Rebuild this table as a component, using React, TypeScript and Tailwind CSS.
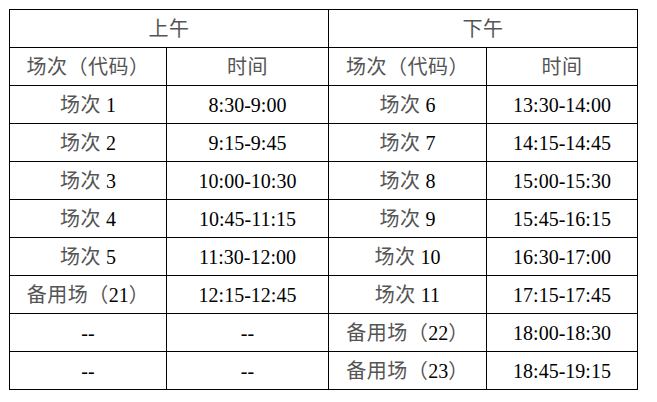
import React from 'react';

const rows: [string, string, string, string][] = [
  ['场次 1', '8:30-9:00', '场次 6', '13:30-14:00'],
  ['场次 2', '9:15-9:45', '场次 7', '14:15-14:45'],
  ['场次 3', '10:00-10:30', '场次 8', '15:00-15:30'],
  ['场次 4', '10:45-11:15', '场次 9', '15:45-16:15'],
  ['场次 5', '11:30-12:00', '场次 10', '16:30-17:00'],
  ['备用场（21）', '12:15-12:45', '场次 11', '17:15-17:45'],
  ['--', '--', '备用场（22）', '18:00-18:30'],
  ['--', '--', '备用场（23）', '18:45-19:15'],
];

// CJK glyphs look lighter in the source (Song face), so tint them grey
function Mixed({ text }: { text: string }) {
  const parts = text.split(/([\u3000-\u9fff\uff00-\uffef]+)/).filter(Boolean);
  return (
    <>
      {parts.map((p, i) =>
        /[\u3000-\u9fff\uff00-\uffef]/.test(p) ? (
          <span key={i} className="text-[#555] tracking-[0.5px]">{p}</span>
        ) : (
          <span key={i}>{p}</span>
        )
      )}
    </>
  );
}

const cell = 'border border-black h-[38px] p-0 text-center align-middle';

export default function App() {
  return (
    <div className="bg-white w-[657px] h-[402px] pt-[9px] pl-[9px]">
      <table
        className="border-collapse text-[20px] leading-none text-black [text-spacing-trim:space-all]"
        style={{ fontFamily: '"Liberation Serif", "Noto Sans CJK SC", serif' }}
      >
        <colgroup>
          <col className="w-[157px]" />
          <col className="w-[162px]" />
          <col className="w-[158px]" />
          <col className="w-[151px]" />
        </colgroup>
        <tbody>
          <tr>
            <td colSpan={2} className={cell}><Mixed text="上午" /></td>
            <td colSpan={2} className={cell}><Mixed text="下午" /></td>
          </tr>
          <tr>
            <td className={cell}><Mixed text="场次（代码）" /></td>
            <td className={cell}><Mixed text="时间" /></td>
            <td className={cell}><Mixed text="场次（代码）" /></td>
            <td className={cell}><Mixed text="时间" /></td>
          </tr>
          {rows.map((r, i) => (
            <tr key={i}>
              {r.map((c, j) => (
                <td key={j} className={cell}><Mixed text={c} /></td>
              ))}
            </tr>
          ))}
        </tbody>
      </table>
    </div>
  );
}
